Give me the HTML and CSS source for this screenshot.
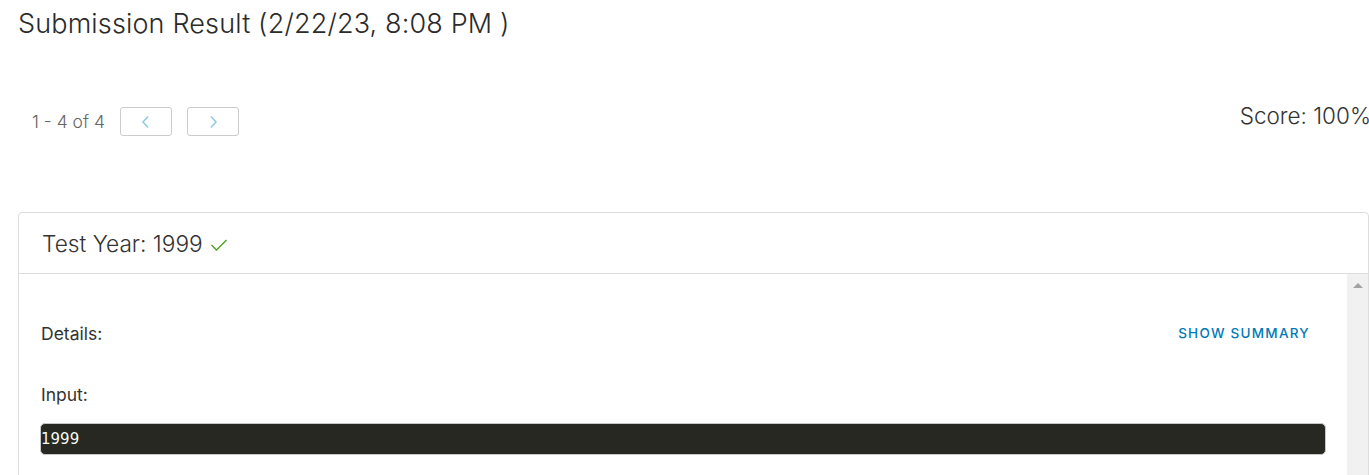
FILE: index.html
```html
<!DOCTYPE html>
<html>
<head>
<meta charset="utf-8">
<link rel="stylesheet" href="styles.css">
</head>
<body>
<div class="page">
  <h1 class="title">Submission Result (2/22/23, 8:08 PM )</h1>
  <div class="toolbar">
    <div class="pager">
      <span class="range">1 - 4 of 4</span>
      <button class="pbtn" aria-label="previous">
        <svg width="10" height="14" viewBox="0 0 10 14"><path d="M7 1.5 L2 7 L7 12.5" fill="none" stroke="#8ccbe0" stroke-width="1.5"/></svg>
      </button>
      <button class="pbtn" aria-label="next">
        <svg width="10" height="14" viewBox="0 0 10 14"><path d="M3 1.5 L8 7 L3 12.5" fill="none" stroke="#8ccbe0" stroke-width="1.5"/></svg>
      </button>
    </div>
    <div class="score">Score: 100%</div>
  </div>
  <div class="card">
    <div class="card-header">
      <span>Test Year: 1999</span>
      <svg class="check" width="18" height="14" viewBox="0 0 18 14"><path d="M1.5 7 L6.5 12 L16.5 2" fill="none" stroke="#4aa21e" stroke-width="1.4"/></svg>
    </div>
    <div class="card-body">
      <div class="content">
        <div class="row">
          <span class="label">Details:</span>
          <a class="summary">SHOW SUMMARY</a>
        </div>
        <div class="label input-label">Input:</div>
        <pre class="code">1999</pre>
      </div>
      <div class="scrollbar">
        <svg width="10" height="6" viewBox="0 0 10 6"><path d="M0 6 L5 1 L10 6 Z" fill="#a3a3a3"/></svg>
      </div>
    </div>
  </div>
</div>
</body>
</html>
```
FILE: styles.css
```css
* { box-sizing: border-box; }
html, body { margin: 0; padding: 0; background: #fff; overflow: hidden; }
body { font-family: Inter, "Noto Sans", sans-serif; color: #333; }
.page { padding: 0 0 0 18px; }
.title {
  margin: 0;
  padding-top: 8px;
  font-size: 27px;
  font-weight: 300;
  line-height: 32px;
  color: #2b2b2b;
  letter-spacing: 0.15px;
}
.toolbar {
  display: flex;
  justify-content: space-between;
  align-items: flex-start;
  margin-top: 60px;
}
.pager {
  display: flex;
  align-items: center;
  padding-left: 14px;
  margin-top: 7px;
}
.range { font-size: 17.5px; color: #666; font-weight: 300; margin-right: 15px; }
.pbtn {
  width: 52px; height: 29px;
  border: 1px solid #ccc; border-radius: 3px;
  background: #fff;
  display: flex; align-items: center; justify-content: center;
  padding: 0;
  margin-right: 15px;
}
.score { font-size: 22.5px; font-weight: 300; color: #333; line-height: 28px; margin-right: -2px; margin-top: 2px; }
.card {
  margin-top: 76px;
  border: 1px solid #ddd;
  border-radius: 4px;
  width: 1351px;
  overflow: hidden;
}
.card-header {
  height: 61px;
  border-bottom: 1px solid #ddd;
  display: flex; align-items: center;
  padding-left: 23px;
  font-size: 22.7px; font-weight: 300; color: #333;
}
.check { margin-left: 7px; margin-top: 4px; }
.card-body { display: flex; height: 300px; }
.content { flex: 1; padding: 45px 21px 0 22px; }
.row { display: flex; justify-content: space-between; align-items: center; height: 28px; }
.label { font-size: 17.5px; color: #333; font-weight: 400; }
.summary {
  font-size: 13.5px; font-weight: 500; letter-spacing: 1.25px;
  color: #0079b8; margin-right: 16px;
}
.input-label { margin-top: 36px; line-height: 24px; }
.code {
  margin: 16px 0 0 -1px;
  height: 32px;
  background: #272822;
  color: #f8f8f2;
  border: 1px solid #c8c8c8;
  border-radius: 5px;
  font-family: "DejaVu Sans", sans-serif;
  font-size: 15px;
  line-height: 30px;
  padding: 0;
}
.scrollbar {
  width: 21px;
  background: #f1f1f1;
  display: flex; justify-content: center;
  padding-top: 8px;
}
```
